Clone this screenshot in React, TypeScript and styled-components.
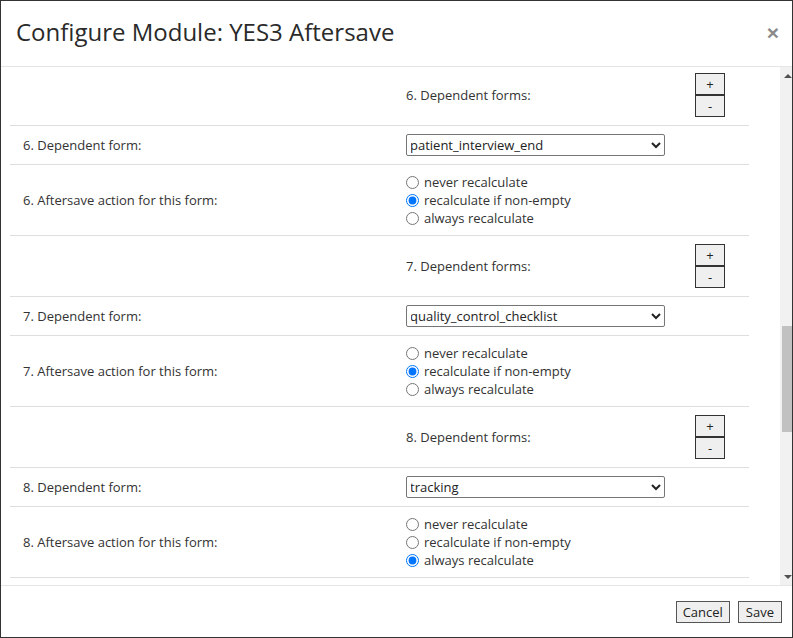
import styled, { createGlobalStyle } from 'styled-components';

const GlobalStyle = createGlobalStyle`
  html, body {
    margin: 0;
    padding: 0;
    background: #fff;
  }
  body {
    font-family: "Open Sans", "Liberation Sans", sans-serif;
    font-size: 13px;
    color: #333;
  }
`;

type Action = 'never' | 'nonempty' | 'always';

interface IForm {
  n: number;
  form: string;
  action: Action;
}

const forms: IForm[] = [
  { n: 6, form: 'patient_interview_end', action: 'nonempty' },
  { n: 7, form: 'quality_control_checklist', action: 'nonempty' },
  { n: 8, form: 'tracking', action: 'always' }
];

const actions: { value: Action; label: string }[] = [
  { value: 'never', label: 'never recalculate' },
  { value: 'nonempty', label: 'recalculate if non-empty' },
  { value: 'always', label: 'always recalculate' }
];

export default function App() {
  return (
    <>
      <GlobalStyle />
      <Modal>
        <Header>
          <Title>Configure Module: YES3 Aftersave</Title>
          <Close>×</Close>
        </Header>

        <Body>
          <Viewport>
            <Table>
              {forms.map((f) => (
                <Section key={f.n}>
                  <Row>
                    <Cell />
                    <Cell>
                      <FormsHead>
                        <span>{f.n}. Dependent forms:</span>
                        <Stepper>
                          <StepButton>+</StepButton>
                          <StepButton>-</StepButton>
                        </Stepper>
                      </FormsHead>
                    </Cell>
                  </Row>
                  <Row>
                    <Cell>{f.n}. Dependent form:</Cell>
                    <Cell>
                      <Select defaultValue={f.form}>
                        <option value={f.form}>{f.form}</option>
                      </Select>
                    </Cell>
                  </Row>
                  <Row>
                    <Cell>{f.n}. Aftersave action for this form:</Cell>
                    <Cell>
                      <Radios>
                        {actions.map((a) => (
                          <RadioLabel key={a.value}>
                            <Radio
                              type="radio"
                              name={`action-${f.n}`}
                              defaultChecked={a.value === f.action}
                            />
                            {a.label}
                          </RadioLabel>
                        ))}
                      </Radios>
                    </Cell>
                  </Row>
                </Section>
              ))}
              <Row>
                <Cell />
                <Cell />
              </Row>
            </Table>
          </Viewport>
          <Scrollbar>
            <ArrowBox>
              <ArrowUp />
            </ArrowBox>
            <Track>
              <Thumb />
            </Track>
            <ArrowBox>
              <ArrowDown />
            </ArrowBox>
          </Scrollbar>
        </Body>

        <Footer>
          <FooterButton>Cancel</FooterButton>
          <FooterButton $wide>Save</FooterButton>
        </Footer>
      </Modal>
    </>
  );
}

const Modal = styled.div`
  width: 793px;
  height: 638px;
  box-sizing: border-box;
  border: 1px solid #333;
  display: flex;
  flex-direction: column;
  background: #fff;
`;

const Header = styled.div`
  height: 66px;
  box-sizing: border-box;
  flex: none;
  display: flex;
  align-items: center;
  justify-content: space-between;
  padding: 0 13px 3px 15px;
  border-bottom: 1px solid #e5e5e5;
`;

const Title = styled.h4`
  margin: 0;
  font-size: 24px;
  font-weight: 400;
  color: #2a2a2a;
  line-height: 1.4;
`;

const Close = styled.span`
  font-family: "Liberation Sans", Arial, sans-serif;
  font-size: 21px;
  font-weight: 700;
  color: #8a8a8a;
  line-height: 1;
  margin-top: 1px;
`;

const Body = styled.div`
  height: 518px;
  flex: none;
  display: flex;
`;

const Viewport = styled.div`
  flex: 1;
  overflow: hidden;
  padding: 0 31px 0 9px;
`;

const Table = styled.div`
  margin-top: -2px;
`;

const Section = styled.div``;

const Row = styled.div`
  display: grid;
  grid-template-columns: 383px 1fr;
  border-bottom: 1px solid #dedede;
`;

const Cell = styled.div`
  padding: 8px 13px;
  display: flex;
  align-items: center;
  min-height: 20px;
`;

const FormsHead = styled.div`
  flex: 1;
  display: flex;
  align-items: center;
  justify-content: space-between;
  padding-right: 11px;
`;

const Stepper = styled.div`
  display: flex;
  flex-direction: column;
`;

const StepButton = styled.button`
  width: 30px;
  height: 22px;
  padding: 0;
  margin: 0;
  border: 1px solid #333;
  border-radius: 0;
  background: #efefef;
  font-family: "Open Sans", "Liberation Sans", sans-serif;
  font-size: 13px;
  color: #222;
  line-height: 1;
`;

const Select = styled.select`
  width: 259px;
  height: 22px;
  font-family: "Open Sans", "Liberation Sans", sans-serif;
  font-size: 13px;
  color: #222;
  border: 1px solid #767676;
  border-radius: 2px;
  background: #fff;
  padding: 0;
  text-indent: -1px;
`;

const Radios = styled.div`
  display: flex;
  flex-direction: column;
`;

const RadioLabel = styled.label`
  display: flex;
  align-items: center;
  height: 18px;
`;

const Radio = styled.input`
  width: 13px;
  height: 13px;
  margin: 0 5px 0 0;
`;

const Scrollbar = styled.div`
  width: 12px;
  flex: none;
  display: flex;
  flex-direction: column;
  background: #f1f1f1;
`;

const ArrowBox = styled.div`
  height: 17px;
  flex: none;
  display: flex;
  align-items: center;
  justify-content: center;
  padding-left: 3px;
`;

const ArrowUp = styled.div`
  width: 0;
  height: 0;
  border-left: 4px solid transparent;
  border-right: 4px solid transparent;
  border-bottom: 4px solid #505050;
`;

const ArrowDown = styled.div`
  width: 0;
  height: 0;
  border-left: 4px solid transparent;
  border-right: 4px solid transparent;
  border-top: 4px solid #505050;
`;

const Track = styled.div`
  flex: 1;
  padding-left: 2px;
`;

const Thumb = styled.div`
  margin-top: 242px;
  width: 10px;
  height: 106px;
  background: #c1c1c1;
`;

const Footer = styled.div`
  flex: 1;
  display: flex;
  align-items: center;
  justify-content: flex-end;
  gap: 8px;
  padding: 0 10px 0 0;
  border-top: 1px solid #e5e5e5;
`;

const FooterButton = styled.button<{ $wide?: boolean }>`
  height: 22px;
  padding: 0 ${(p) => (p.$wide ? '7px' : '6px')};
  border: 1px solid #555;
  border-radius: 0;
  background: #efefef;
  font-family: "Open Sans", "Liberation Sans", sans-serif;
  font-size: 13px;
  color: #222;
`;
